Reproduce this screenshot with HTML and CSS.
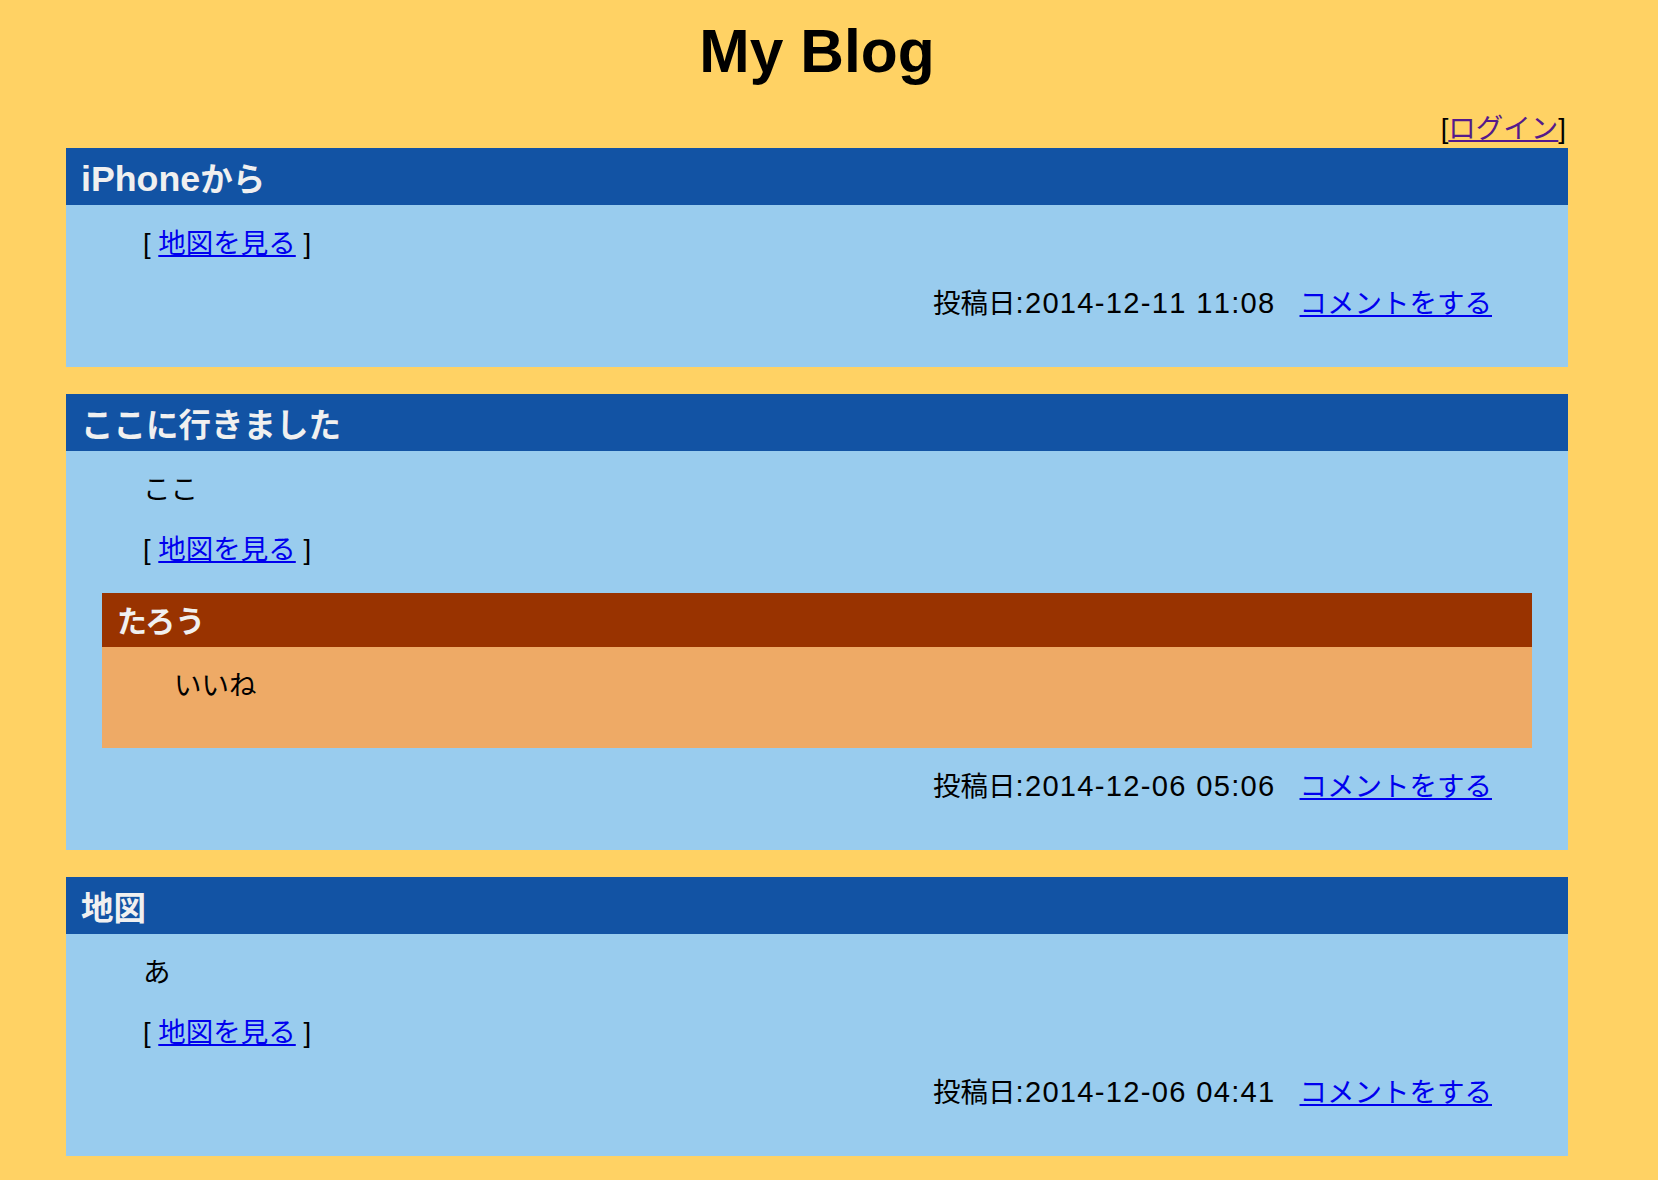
FILE: index.html
```html
<!DOCTYPE html>
<html lang="ja">
<head>
<meta charset="utf-8">
<title>My Blog</title>
<link rel="stylesheet" href="styles.css">
</head>
<body>
<div class="page">
  <h1 class="site-title">My Blog</h1>
  <p class="auth">[<a class="auth-link" href="#">ログイン</a>]</p>

  <article class="post">
    <h2 class="post-title"><span class="latin">iPhone</span>から</h2>
    <div class="post-body">
      <p class="line">[ <a href="#">地図を見る</a> ]</p>
      <p class="meta">投稿日<span class="stamp">:2014-12-11 11:08</span><a class="comment-link" href="#">コメントをする</a></p>
    </div>
  </article>

  <article class="post">
    <h2 class="post-title">ここに行きました</h2>
    <div class="post-body">
      <p class="line">ここ</p>
      <p class="line">[ <a href="#">地図を見る</a> ]</p>
      <section class="comment">
        <h3 class="comment-title">たろう</h3>
        <div class="comment-body">
          <p class="comment-text">いいね</p>
        </div>
      </section>
      <p class="meta">投稿日<span class="stamp">:2014-12-06 05:06</span><a class="comment-link" href="#">コメントをする</a></p>
    </div>
  </article>

  <article class="post">
    <h2 class="post-title">地図</h2>
    <div class="post-body">
      <p class="line">あ</p>
      <p class="line">[ <a href="#">地図を見る</a> ]</p>
      <p class="meta">投稿日<span class="stamp">:2014-12-06 04:41</span><a class="comment-link" href="#">コメントをする</a></p>
    </div>
  </article>
</div>
</body>
</html>
```

FILE: styles.css
```css
html, body {
  margin: 0;
  padding: 0;
}

body {
  background: #FFD264;
  color: #000;
  font-family: "Liberation Sans", "Noto Sans CJK JP", sans-serif;
  font-size: 27.5px;
}

.page {
  width: 1502px;
  margin-left: 66px;
  padding-top: 17px;
}

.site-title {
  margin: 0;
  text-align: center;
  font-size: 60.5px;
  line-height: 68px;
  font-weight: bold;
}

.auth {
  margin: 26.5px 0 2.5px;
  text-align: right;
  line-height: 34px;
  padding-right: 2px;
}

a {
  color: #0000EE;
}

.auth-link {
  color: #551A8B;
}

.post {
  margin-bottom: 27px;
}

.post-title {
  margin: 0;
  background: #1253A4;
  color: #F0F0F0;
  font-size: 32.5px;
  font-weight: bold;
  line-height: 49px;
  padding: 8px 15px 0;
}

.latin {
  font-size: 1.1em;
  line-height: 1;
}

.post-body {
  background: #99CCEE;
  padding: 22px 36px 46px;
}

.line {
  margin: 0 0 26px 41px;
  line-height: 34px;
}

.meta {
  margin: 0 40px 0 0;
  text-align: right;
  line-height: 34px;
}

.stamp {
  font-size: 1.06em;
  line-height: 1;
  letter-spacing: 0.044em;
  font-kerning: none;
}

.comment-link {
  margin-left: 24px;
}

.comment {
  margin: 0 0 22px;
}

.comment-title {
  margin: 0;
  background: #993300;
  color: #F0F0F0;
  font-size: 30px;
  font-weight: bold;
  line-height: 51px;
  padding: 3px 15px 0;
}

.comment-body {
  background: #EEAA66;
  padding: 22px 0 45px 72px;
}

.comment-text {
  margin: 0;
  line-height: 34px;
}
```
